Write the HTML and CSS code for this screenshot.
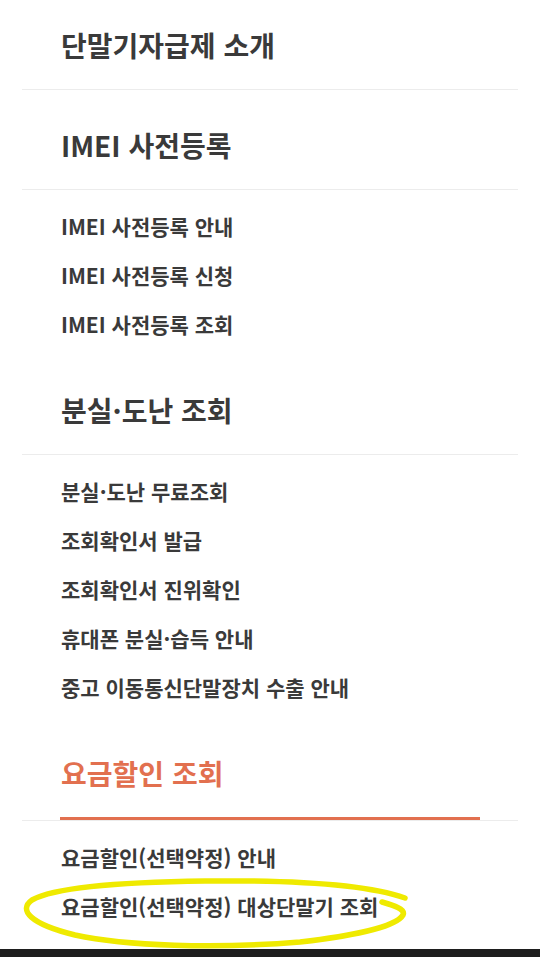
FILE: index.html
```html
<!DOCTYPE html>
<html lang="ko">
<head>
    <meta charset="UTF-8">
    <meta name="viewport" content="width=device-width, initial-scale=1.0">
    <title>전체메뉴</title>
    <link rel="stylesheet" href="styles.css">
</head>
<body>
    <div class="menu">
        <div class="menu-title first">
            <a class="menu-link" href="#">단말기자급제 소개</a>
        </div>

        <div class="menu-title">
            <a class="menu-link" href="#">IMEI 사전등록</a>
        </div>
        <ul class="sub-list">
            <li><a href="#">IMEI 사전등록 안내</a></li>
            <li><a href="#">IMEI 사전등록 신청</a></li>
            <li><a href="#">IMEI 사전등록 조회</a></li>
        </ul>

        <div class="menu-title">
            <a class="menu-link" href="#">분실·도난 조회</a>
        </div>
        <ul class="sub-list">
            <li><a href="#">분실·도난 무료조회</a></li>
            <li><a href="#">조회확인서 발급</a></li>
            <li><a href="#">조회확인서 진위확인</a></li>
            <li><a href="#">휴대폰 분실·습득 안내</a></li>
            <li><a href="#">중고 이동통신단말장치 수출 안내</a></li>
        </ul>

        <!-- current section -->
        <div class="menu-title active">
            <a class="menu-link" href="#">요금할인 조회</a>
        </div>
        <ul class="sub-list">
            <li><a href="#">요금할인(선택약정) 안내</a></li>
            <li><a href="#">요금할인(선택약정) 대상단말기 조회</a></li>
        </ul>
    </div>

    <div class="bottom-bar"></div>

    <!-- highlighter mark drawn over the last item -->
    <svg class="marker" width="540" height="957" viewBox="0 0 540 957">
        <path d="M405 898 C368 885 300 880 205 881 C125 882 55 887 32 900 C18 910 30 924 75 935 C125 946 215 949 300 942 C352 936 396 927 403 915 C406 909 392 905 382 902"
              fill="none" stroke="#efea00" stroke-width="5.5" stroke-linecap="round" stroke-linejoin="round"/>
    </svg>
</body>
</html>
```

FILE: styles.css
```css
body {
    margin: 0;
    position: relative;
    background-color: #fff;
    font-family: "Noto Sans CJK KR", "Noto Sans", sans-serif;
    color: #3a3a3a;
}
a {
    color: inherit;
    text-decoration: none;
}
.menu {
    padding: 0 22px;
}
.menu-title {
    padding: 0 38px;
    border-bottom: 1px solid #ececec;
}
.menu-link {
    display: block;
    padding: 37px 0 26px 1px;
    font-size: 28px;
    line-height: 36px;
    font-weight: 700;
}
.menu-title.first .menu-link {
    padding-top: 27px; /* page is scrolled a little */
}
.menu-title.active .menu-link {
    color: #e2704f;
    border-bottom: 3px solid #e2704f;
}
.sub-list {
    list-style: none;
    margin: 0;
    padding: 12px 38px 6px 39px;
}
.sub-list li {
    font-size: 21px;
    line-height: 49px;
    font-weight: 700;
}
.bottom-bar {
    margin-top: 12px;
    height: 8px;
    background-color: #1e1e1e;
}
.marker {
    position: absolute;
    top: 0;
    left: 0;
    pointer-events: none;
}
```
